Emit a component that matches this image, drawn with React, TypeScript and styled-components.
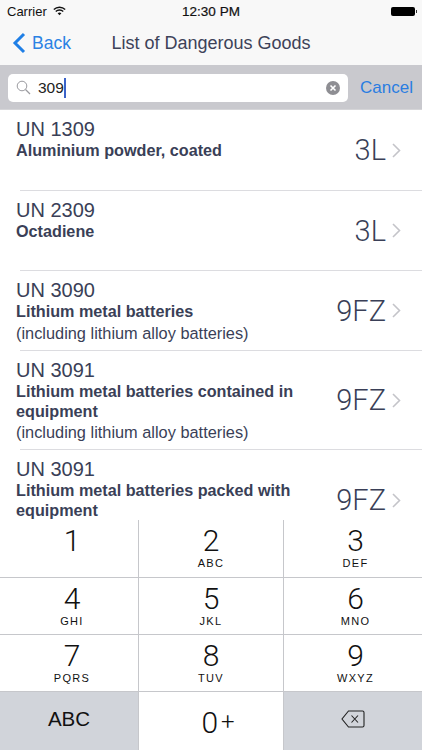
import styled, { createGlobalStyle } from 'styled-components';

const GlobalStyle = createGlobalStyle`
	html, body {
		margin: 0;
		padding: 0;
		background: #fff;
	}
	body {
		font-family: "Liberation Sans", Arial, sans-serif;
	}
`;

const goods = [
	{ id: 'UN 1309', name: 'Aluminium powder, coated', grade: '3L', height: 80 },
	{ id: 'UN 2309', name: 'Octadiene', grade: '3L', height: 79 },
	{ id: 'UN 3090', name: 'Lithium metal batteries', note: '(including lithium alloy batteries)', grade: '9FZ', height: 79 },
	{ id: 'UN 3091', name: 'Lithium metal batteries contained in equipment', note: '(including lithium alloy batteries)', grade: '9FZ', height: 98 },
	{ id: 'UN 3091', name: 'Lithium metal batteries packed with equipment', grade: '9FZ', height: 100 },
];

const keys = [
	['1', '', 'left'],
	['2', 'ABC', 'mid'],
	['3', 'DEF', 'right'],
	['4', 'GHI', 'left'],
	['5', 'JKL', 'mid'],
	['6', 'MNO', 'right'],
	['7', 'PQRS', 'left'],
	['8', 'TUV', 'mid'],
	['9', 'WXYZ', 'right'],
];

const App = () => {
	return (
		<Screen>
			<GlobalStyle />
			<StatusBar>
				<Carrier>
					Carrier
					<svg width="13" height="10" viewBox="0 0 16 12">
						<path d="M1 4.2a10 10 0 0 1 14 0" fill="none" stroke="#111" strokeWidth="1.7" />
						<path d="M3.4 6.6a6.6 6.6 0 0 1 9.2 0" fill="none" stroke="#111" strokeWidth="1.7" />
						<path d="M5.7 8.9a3.3 3.3 0 0 1 4.6 0L8 11.2z" fill="#111" />
					</svg>
				</Carrier>
				<Time>12:30 PM</Time>
				<Battery />
			</StatusBar>
			<NavBar>
				<BackButton>
					<svg width="14" height="22" viewBox="0 0 14 22">
						<path d="M12 2 L3 11 L12 20" fill="none" stroke="#1f7fe6" strokeWidth="3" />
					</svg>
					<span>Back</span>
				</BackButton>
				<Title>List of Dangerous Goods</Title>
			</NavBar>
			<SearchBar>
				<SearchField>
					<svg width="15" height="15" viewBox="0 0 15 15">
						<circle cx="6" cy="6" r="4.8" fill="none" stroke="#9a9a9f" strokeWidth="1" />
						<path d="M9.5 9.5 L14 14" stroke="#9a9a9f" strokeWidth="1.2" />
					</svg>
					<SearchText>309</SearchText>
					<Caret />
					<ClearButton>
						<svg width="14" height="14" viewBox="0 0 14 14">
							<circle cx="7" cy="7" r="7" fill="#8e8e93" />
							<path d="M4.5 4.5 L9.5 9.5 M9.5 4.5 L4.5 9.5" stroke="#fff" strokeWidth="1.6" />
						</svg>
					</ClearButton>
				</SearchField>
				<Cancel>Cancel</Cancel>
			</SearchBar>
			<List>
				{goods.map((item, i) => (
					<div key={i}>
						<Row $height={item.height}>
							<RowText>
								<GoodsId>{item.id}</GoodsId>
								<GoodsName>{item.name}</GoodsName>
								{item.note && <GoodsNote>{item.note}</GoodsNote>}
							</RowText>
							<Grade>{item.grade}</Grade>
							<svg width="9" height="15" viewBox="0 0 9 15">
								<path d="M1 1 L7.5 7.5 L1 14" fill="none" stroke="#c4c4c9" strokeWidth="1.6" />
							</svg>
						</Row>
						{i < goods.length - 1 && <Separator />}
					</div>
				))}
			</List>
			<Keypad>
				{keys.map(([digit, letters, column]) => (
					<Key key={digit} $column={column}>
						<Digit>{digit}</Digit>
						<Letters>{letters}</Letters>
					</Key>
				))}
				<ModeKey>ABC</ModeKey>
				<ZeroKey>
					0<Plus>+</Plus>
				</ZeroKey>
				<DeleteKey>
					<svg width="24" height="18" viewBox="0 0 24 18">
						<path d="M7.5 1 H21.5 A1.5 1.5 0 0 1 23 2.5 V15.5 A1.5 1.5 0 0 1 21.5 17 H7.5 L1 9 Z" fill="none" stroke="#222" strokeWidth="1.1" />
						<path d="M10.5 5.5 L17 12.5 M17 5.5 L10.5 12.5" stroke="#222" strokeWidth="1.1" />
					</svg>
				</DeleteKey>
			</Keypad>
		</Screen>
	);
};

const Screen = styled.div`
	width: 422px;
	height: 750px;
	display: flex;
	flex-direction: column;
	overflow: hidden;
	background: #fff;
`;

const StatusBar = styled.div`
	height: 22px;
	flex: none;
	display: flex;
	align-items: center;
	justify-content: space-between;
	padding: 0 7px;
	background: #f8f8f8;
	color: #111;
	position: relative;
`;

const Carrier = styled.div`
	display: flex;
	align-items: center;
	gap: 6px;
	font-size: 13px;
`;

const Time = styled.div`
	font-size: 13.5px;
	font-weight: 500;
	position: absolute;
	left: 0;
	right: 0;
	text-align: center;
	-webkit-text-stroke: 0.2px #111;
`;

const Battery = styled.div`
	width: 24px;
	height: 9px;
	background: #000;
	border-radius: 2px;
	position: relative;

	&::after {
		content: '';
		position: absolute;
		right: -2px;
		top: 3px;
		width: 1px;
		height: 3px;
		background: #333;
	}
`;

const NavBar = styled.div`
	height: 43px;
	flex: none;
	display: flex;
	align-items: center;
	justify-content: center;
	background: #f8f8f8;
	position: relative;
`;

const BackButton = styled.div`
	position: absolute;
	left: 12px;
	top: 10px;
	display: flex;
	align-items: center;
	gap: 6px;
	font-size: 17.5px;
	color: #2a82e4;
`;

const Title = styled.div`
	font-size: 18px;
	color: #3d4259;
`;

const SearchBar = styled.div`
	height: 45px;
	flex: none;
	box-sizing: border-box;
	display: flex;
	align-items: center;
	padding: 1px 9px 0 8px;
	background: #c9c9ce;
	border-bottom: 1px solid #d5d5d8;
`;

const SearchField = styled.div`
	width: 340px;
	height: 28px;
	flex: none;
	box-sizing: border-box;
	display: flex;
	align-items: center;
	padding: 0 8px;
	background: #fff;
	border-radius: 5px;
`;

const SearchText = styled.span`
	margin-left: 7px;
	font-size: 15.5px;
	color: #222;
`;

const Caret = styled.span`
	width: 2px;
	height: 20px;
	background: #3a62c8;
`;

const ClearButton = styled.span`
	margin-left: auto;
	display: flex;
`;

const Cancel = styled.div`
	margin-left: auto;
	font-size: 17px;
	color: #2a7de1;
`;

const List = styled.div`
	flex: 1;
	min-height: 0;
	overflow: hidden;
`;

const Row = styled.div<{ $height: number }>`
	height: ${(p) => p.$height}px;
	box-sizing: border-box;
	display: flex;
	align-items: center;
	padding: 0 21px 0 16px;
	gap: 6px;
`;

const RowText = styled.div`
	flex: 1;
	min-width: 0;
	align-self: flex-start;
	padding-top: 7px;
	padding-right: 22px;
	color: #3a3f57;
`;

const GoodsId = styled.div`
	font-size: 20px;
	line-height: 24px;
`;

const GoodsName = styled.div`
	font-size: 16.2px;
	font-weight: 700;
	line-height: 19.5px;
`;

const GoodsNote = styled.div`
	font-size: 16.35px;
	line-height: 22px;
`;

const Grade = styled.div`
	font-family: Roboto, "Liberation Sans", sans-serif;
	font-weight: 300;
	font-size: 29px;
	color: #3a3f57;
`;

const Separator = styled.div`
	height: 1px;
	margin-left: 20px;
	background: #dcdce0;
`;

const Keypad = styled.div`
	height: 230px;
	flex: none;
	display: grid;
	grid-template-columns: 138px 144px 138px;
	grid-template-rows: 57px 56px 56px 58px;
	gap: 1px;
	background: #c6c7cb;
	color: #111;
`;

const Key = styled.div<{ $column: string }>`
	display: flex;
	flex-direction: column;
	align-items: center;
	box-sizing: border-box;
	padding-left: ${(p) => (p.$column === 'left' ? 6 : p.$column === 'right' ? 5 : 0)}px;
	background: #fff;
`;

const Digit = styled.div`
	font-family: Roboto, "Liberation Sans", sans-serif;
	font-weight: 300;
	font-size: 30px;
	line-height: 36px;
	margin-top: 3px;
`;

const Letters = styled.div`
	font-size: 11px;
	line-height: 13px;
	letter-spacing: 1.3px;
	margin-top: -2px;
`;

const ModeKey = styled.div`
	display: flex;
	align-items: center;
	justify-content: center;
	background: #d1d4da;
	font-size: 20.5px;
	padding-bottom: 4px;
`;

const ZeroKey = styled.div`
	display: flex;
	align-items: center;
	justify-content: center;
	background: #fff;
	font-family: Roboto, "Liberation Sans", sans-serif;
	font-weight: 300;
	font-size: 30px;
	padding: 2px 0 0 14px;
`;

const Plus = styled.span`
	font-size: 24px;
	margin-left: 3px;
`;

const DeleteKey = styled.div`
	display: flex;
	align-items: center;
	justify-content: center;
	background: #d1d4da;
	padding-bottom: 4px;
`;

export default App;
